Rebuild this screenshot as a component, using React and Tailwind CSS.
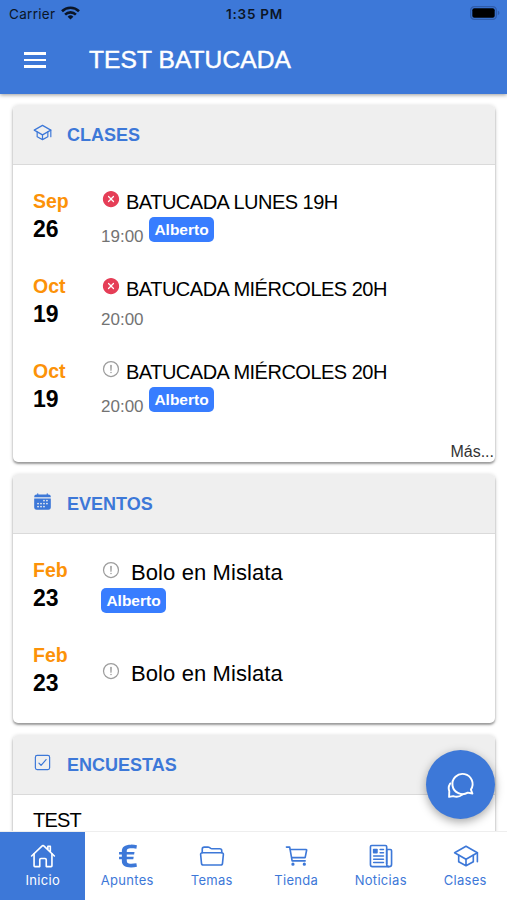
import {
  IoAlertCircleOutline,
  IoCalendar,
  IoCartOutline,
  IoCheckboxOutline,
  IoCloseCircle,
  IoFolderOpenOutline,
  IoHomeOutline,
  IoLogoEuro,
  IoNewspaperOutline,
  IoSchoolOutline,
} from "react-icons/io5";

const clases = [
  { month: "Sep", day: "26", title: "BATUCADA LUNES 19H", time: "19:00", who: "Alberto", cancelled: true },
  { month: "Oct", day: "19", title: "BATUCADA MIÉRCOLES 20H", time: "20:00", cancelled: true },
  { month: "Oct", day: "19", title: "BATUCADA MIÉRCOLES 20H", time: "20:00", who: "Alberto" },
];

const eventos = [
  { month: "Feb", day: "23", title: "Bolo en Mislata", who: "Alberto" },
  { month: "Feb", day: "23", title: "Bolo en Mislata" },
];

const tabs = [
  { label: "Inicio", icon: IoHomeOutline, active: true },
  { label: "Apuntes", icon: IoLogoEuro },
  { label: "Temas", icon: IoFolderOpenOutline },
  { label: "Tienda", icon: IoCartOutline },
  { label: "Noticias", icon: IoNewspaperOutline },
  { label: "Clases", icon: IoSchoolOutline },
];

function StatusBar() {
  return (
    <div className="grid h-7 grid-cols-3 items-center pl-[9px] pr-[7px] font-['Inter',sans-serif] text-[13.5px] text-[#0b1526]">
      <div className="flex items-center gap-[6px]">
        <span className="tracking-[0.3px]">Carrier</span>
        <svg className="-mt-[2px]" width="19" height="14" viewBox="0 0 19 14" fill="none" stroke="#0b1526" strokeWidth="2.6">
          <path d="M1 5.2a12.2 12.2 0 0 1 17 0" />
          <path d="M4.1 8.6a7.700 7.700 0 0 1 10.800 0" />
          <path d="M9.500 13.600 6.600 10.700a4.100 4.100 0 0 1 5.800 0Z" fill="#0b1526" stroke="none" />
        </svg>
      </div>
      <span className="text-center font-semibold tracking-[0.75px]">1:35 PM</span>
      <svg className="-mt-[2px] justify-self-end" width="30" height="14" viewBox="0 0 30 14">
        <rect x="0.7" y="0.7" width="25.6" height="12.6" rx="3.6" fill="none" stroke="#2f5cab" strokeWidth="1.3" />
        <rect x="2.3" y="2.3" width="22.4" height="9.4" rx="2" fill="#000" />
        <path d="M27.8 4.800v4.400c1-.3 1.600-1.200 1.600-2.200s-.6-1.900-1.600-2.200Z" fill="#2f5cab" />
      </svg>
    </div>
  );
}

function ChatIcon() {
  return (
    <svg width="28" height="28" viewBox="0 0 28 28" fill="none" stroke="currentColor" strokeWidth="1.9" strokeLinecap="round" strokeLinejoin="round">
      <path d="M23.900 18.600 25.400 22.500 20.800 21.600A10.100 10.100 0 1 1 23.900 18.600Z" />
      <path d="M3.200 12.400c-1.700 2.600-2 5-.9 7.700L2.100 25.900l4.100-.8c3.200 1.200 6.400.8 9.100-1.500" />
    </svg>
  );
}

function Card({ icon: Icon, title, className, children }) {
  return (
    <section className={`overflow-hidden rounded-[5px] bg-white shadow-[0_2px_2px_rgba(0,0,0,0.3),0_1px_4px_rgba(0,0,0,0.2)] ${className}`}>
      <h2 className="flex h-[60px] items-center border-b-[1.5px] border-[#dadada] bg-[#efefef] pl-5 text-[#3d78d8]">
        <Icon className="mb-1 size-[19px]" />
        <span className="ml-[15px] mt-[2px] text-[18px] font-bold">{title}</span>
      </h2>
      {children}
    </section>
  );
}

function DateColumn({ month, day }) {
  return (
    <div className="w-[68px] shrink-0 font-bold">
      <p className="text-[19.5px] leading-7 text-[#fc9208]">{month}</p>
      <p className="text-[23px] leading-7 text-black">{day}</p>
    </div>
  );
}

function Status({ cancelled }) {
  return cancelled ? (
    <IoCloseCircle className="size-[20px] text-[#e53e57]" />
  ) : (
    <IoAlertCircleOutline className="size-[20px] text-[#9d9d9d]" />
  );
}

function Badge({ children }) {
  return (
    <span className="flex h-[25px] w-[65px] items-center justify-center rounded-[5px] bg-[#387dff] text-[15.5px] font-bold text-white">
      {children}
    </span>
  );
}

function ClaseRow({ item }) {
  return (
    <li className="flex h-[85px]">
      <DateColumn month={item.month} day={item.day} />
      <div>
        <div className={item.who ? "mt-[1px] flex h-7 items-center" : "mt-[3px] flex h-7 items-center"}>
          <span className="mb-[6px]"><Status cancelled={item.cancelled} /></span>
          <span className="ml-[5px] text-[20px] tracking-[-0.5px] text-black">{item.title}</span>
        </div>
        <div className={item.who ? "mt-[1px] flex h-[30px]" : "-mt-[3px] flex h-[30px]"}>
          <span className="mt-2 w-[48px] text-[17px] leading-6 text-[#737373]">{item.time}</span>
          {item.who && <Badge>{item.who}</Badge>}
        </div>
      </div>
    </li>
  );
}

function EventoRow({ item }) {
  return (
    <li className="flex h-[85px]">
      <DateColumn month={item.month} day={item.day} />
      <div className={item.who ? "mt-[1px]" : "mt-[17px]"}>
        <div className="flex h-[30px] items-center">
          <span className="mb-[5px]"><Status /></span>
          <span className="ml-[10px] text-[22px] tracking-[0.1px] text-black">{item.title}</span>
        </div>
        {item.who && <div className="mt-[1px]"><Badge>{item.who}</Badge></div>}
      </div>
    </li>
  );
}

export default function App() {
  return (
    <div className="relative flex h-[900px] w-[507px] flex-col overflow-hidden bg-white font-['Liberation_Sans',Arial,sans-serif]">
      <header className="z-10 h-[94px] shrink-0 bg-[#3d78d8] shadow-[0_1px_4px_rgba(0,0,0,0.4)]">
        <StatusBar />
        <div className="flex h-[64px] items-center pl-6 text-white">
          <button className="flex w-[22px] flex-col gap-[4px]" aria-label="Menú">
            <span className="h-[2.5px] bg-white" />
            <span className="h-[2.5px] bg-white" />
            <span className="h-[2.5px] bg-white" />
          </button>
          <h1 className="ml-[43px] text-[24.5px] tracking-[0.1px] [-webkit-text-stroke:0.5px_white]">TEST BATUCADA</h1>
        </div>
      </header>

      <main className="flex min-h-0 flex-1 flex-col gap-3 overflow-hidden pl-[13px] pr-3 pt-[11px]">
        <Card icon={IoSchoolOutline} title="CLASES" className="h-[357px] shrink-0">
          <ul className="h-[275px] pl-5 pt-[22px]">
            {clases.map((c, i) => <ClaseRow key={i} item={c} />)}
          </ul>
          <p className="pr-[1px] text-right text-[16px] leading-6 text-[#333]">Más...</p>
        </Card>

        <Card icon={IoCalendar} title="EVENTOS" className="h-[249px] shrink-0">
          <ul className="pl-5 pt-[22px]">
            {eventos.map((e, i) => <EventoRow key={i} item={e} />)}
          </ul>
        </Card>

        <Card icon={IoCheckboxOutline} title="ENCUESTAS" className="h-[200px] shrink-0">
          <p className="pl-5 pt-[11px] text-[20px] leading-7 tracking-[-0.8px] text-black">TEST</p>
        </Card>
      </main>

      <button className="absolute left-[426px] top-[750px] z-10 flex size-[69px] items-center justify-center rounded-full bg-[#3d78d8] text-white shadow-[0_3px_10px_rgba(0,0,0,0.35)]" aria-label="Chat">
        <ChatIcon />
      </button>

      <nav className="z-10 grid h-[69px] shrink-0 grid-cols-6 border-t border-[#eee] bg-white font-['Inter',sans-serif]">
        {tabs.map(({ label, icon: Icon, active }) => (
          <a key={label} className={active ? "flex flex-col items-center bg-[#3d78d8] pt-[11px] text-white" : "flex flex-col items-center pt-[11px] text-[#3d78d8]"}>
            <Icon className="ml-[2px] size-[26px]" />
            <span className="ml-[1px] mt-[3px] text-[13px] leading-4 tracking-[0.3px]">{label}</span>
          </a>
        ))}
      </nav>
    </div>
  );
}
